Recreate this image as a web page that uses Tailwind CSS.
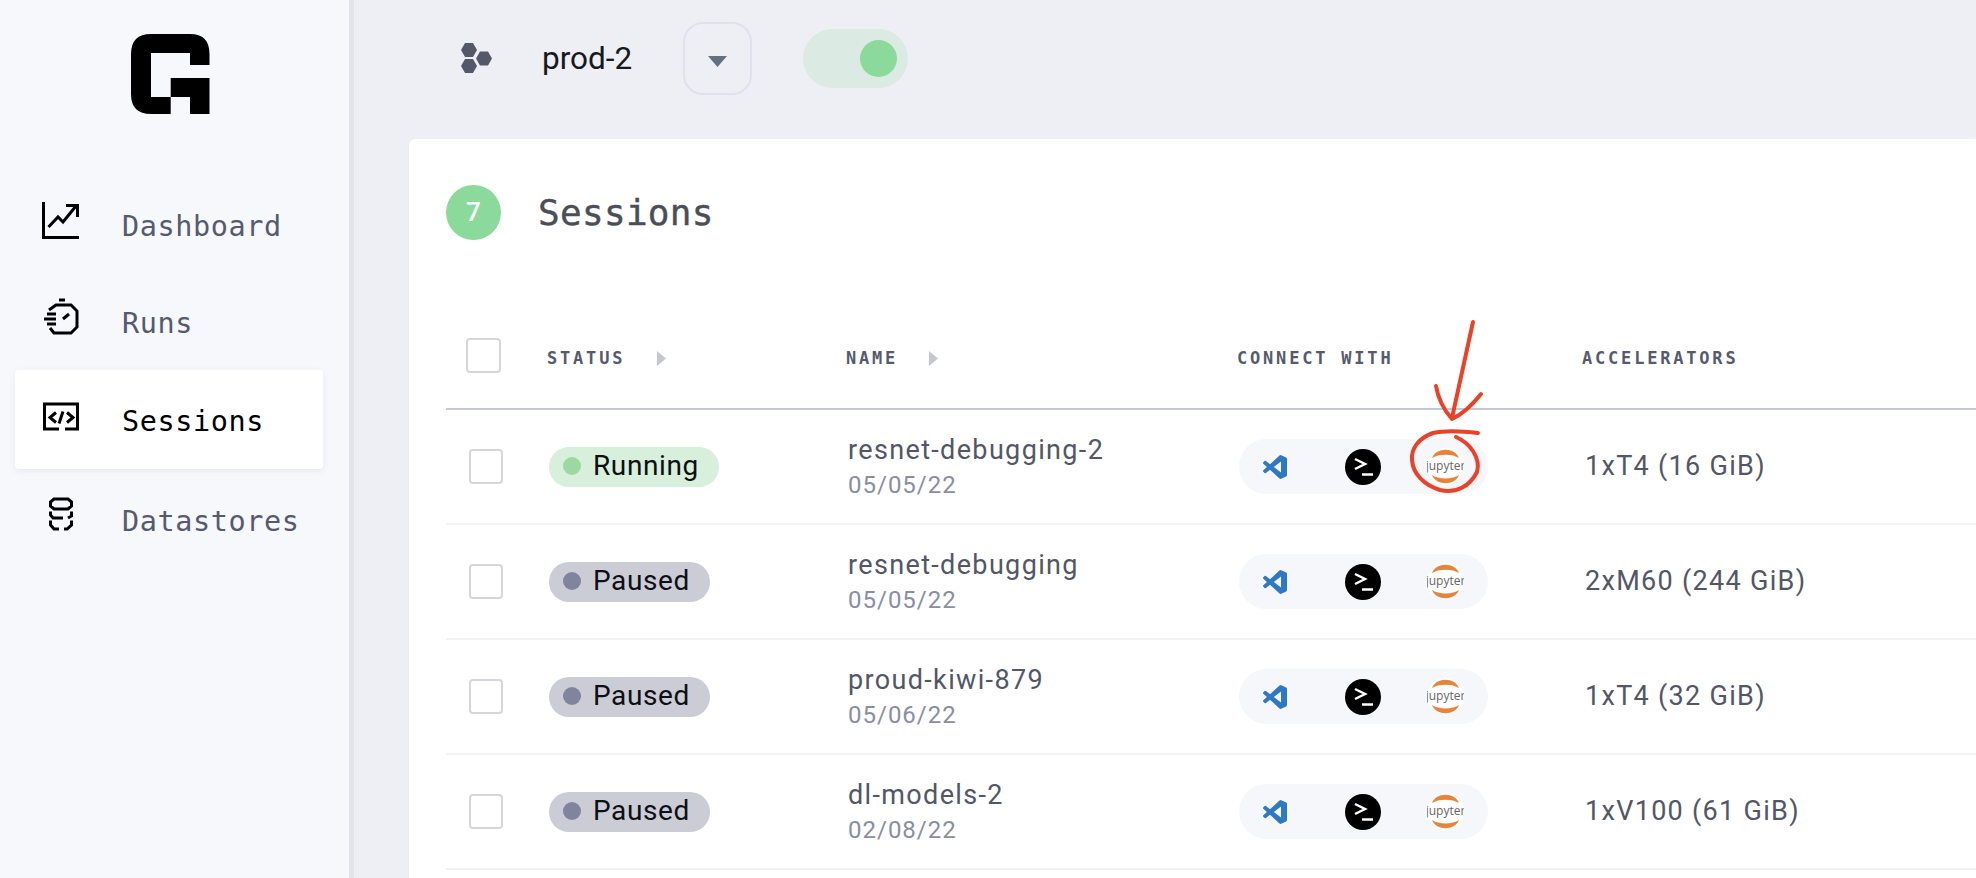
<!DOCTYPE html>
<html>
<head>
<meta charset="utf-8">
<script src="https://cdn.jsdelivr.net/npm/@tailwindcss/browser@4"></script>
</head>
<body class="m-0 h-[878px] w-[1976px] overflow-hidden bg-[#eeeff4] font-['Roboto',sans-serif]">
<div class="relative flex h-[878px] w-[1976px]">
  <aside class="flex h-full w-[354px] shrink-0 flex-col border-r-[5px] border-[#e3e3ec] bg-[#f7f8fc] pl-[15px] pt-[34px]">
    <svg class="ml-[116px] h-[80px] w-[79px]" viewBox="131 34 79 80"><path fill="#000" d="M151 34H190Q209.500 34 209.500 54V65H190V53H151V97H170.700V78H209.500V114H190V97H170.700V114H151Q131 114 131 94V54Q131 34 151 34Z"/></svg>
    <nav class="mt-[61px] flex w-[308px] flex-col font-['DejaVu_Sans_Mono',monospace] text-[28.500px] tracking-[0.600px] text-[#565a6e]">
      <a class="flex h-[98px] items-center gap-[43px] pl-[27px]">
        <svg class="relative top-[-4px] h-[37px] w-[37px] shrink-0" viewBox="0 0 37 37" fill="none" stroke="#000" stroke-width="3"><path d="M1.500 0V35.500H37"/><path d="M6.500 25L16 15L21 20L34 4"/><path d="M24 3.500H35.500V15"/></svg>
        <span class="relative top-[3px]">Dashboard</span>
      </a>
      <a class="flex h-[97px] items-center gap-[43px] pl-[27px]">
        <svg class="relative top-[-5px] h-[37px] w-[37px] shrink-0" viewBox="0 0 37 37" fill="none" stroke="#000" stroke-width="3"><path d="M17 2H23"/><path d="M7 12L14 7H29L35 13V29L29 35H12L8 30"/><path d="M5 16H14M2 21H14M5 26H14"/><path d="M21 21L27 16"/></svg>
        <span class="relative top-[3px]">Runs</span>
      </a>
      <a class="flex h-[99px] items-center gap-[43px] rounded-sm bg-white pl-[27px] text-black shadow-[0_2px_6px_rgba(90,95,140,0.10)]">
        <svg class="relative top-[-3px] h-[37px] w-[37px] shrink-0" viewBox="0 0 37 37" fill="none" stroke="#000" stroke-width="3"><path d="M17 31H2.500V6H35.500V31H23"/><path d="M14 14.500L8 19.500L14 24.500M25 14.500L31 19.500L25 24.500M21 13.500L17 25.500"/></svg>
        <span class="relative top-[3px]">Sessions</span>
      </a>
      <a class="flex h-[102px] items-center gap-[43px] pl-[27px] text-[#565a6e]">
        <svg class="relative top-[-6px] h-[37px] w-[37px] shrink-0" viewBox="0 0 37 37" fill="none" stroke="#000" stroke-width="3"><path d="M12 3H26L29.500 6V10L26 13H12L8.500 10V6Z"/><path d="M8.500 15.500V19L11 22H21M29.500 15.500V20L26 22"/><path d="M8.500 24.500V29L12 33H17M29.500 24.500V29L25 33H22"/></svg>
        <span class="relative top-[2px]">Datastores</span>
      </a>
    </nav>
  </aside>

  <main class="flex min-w-0 flex-1 flex-col">
    <header class="flex h-[139px] shrink-0 items-start">
      <svg class="ml-[107px] mt-[43px] h-[30px] w-[32px]" viewBox="0 0 32 30" fill="#555869"><path d="M0 7L4 0H12L16 7L12 14H4Z"/><path d="M15 15.500L19 8.500H27L31 15.500L27 22.500H19Z"/><path d="M0 23L4 16H12L16 23L12 30H4Z"/></svg>
      <span class="ml-[49px] mt-[40px] w-[91px] text-[31.500px] leading-[38px] text-[#16191d]">prod-2</span>
      <button class="ml-[50px] mt-[22px] flex h-[73px] w-[69px] items-center justify-center rounded-[20px] border-2 border-[#e0e1ec]">
        <svg class="relative top-[3px] h-[11px] w-[19px]" viewBox="0 0 19 11" fill="#64707f"><path d="M0 0H19L9.500 11Z"/></svg>
      </button>
      <div class="ml-[51px] mt-[29px] flex h-[59px] w-[105px] items-center justify-end rounded-full bg-[#dbeae2] pr-[11px]"><span class="h-[37px] w-[37px] rounded-full bg-[#8bd99b]"></span></div>
    </header>

    <section class="ml-[55px] flex-1 rounded-tl-md bg-white pl-[37px]">
      <div class="flex h-[101px] items-end">
        <span class="flex h-[55px] w-[55px] items-center justify-center rounded-full bg-[#8bd99b] text-[26px] font-medium text-white">7</span>
        <h1 class="ml-[37px] pb-[2px] font-['DejaVu_Sans_Mono',monospace] text-[36px] font-normal leading-[50px] tracking-[0.300px] text-[#4a4e55] [-webkit-text-stroke:0.4px_#4a4e55]">Sessions</h1>
      </div>

      <div class="flex h-[170px] items-end border-b-2 border-[#c5c7dc] pb-[35px] font-['DejaVu_Sans_Mono',monospace] text-[17px] font-bold leading-[22px] tracking-[2.800px] text-[#565a6e]">
        <span class="ml-[20px] h-[35px] w-[35px] rounded-[4px] border-2 border-[#d5d6db]"></span>
        <span class="ml-[46px] flex w-[299px] items-center gap-[32px] pb-[4px]">STATUS<svg class="h-[15px] w-[9px]" viewBox="0 0 9 15" fill="#c5c6d2"><path d="M0 0L9 7.500L0 15Z"/></svg></span>
        <span class="flex w-[391px] items-center gap-[31px] pb-[4px]">NAME<svg class="h-[15px] w-[9px]" viewBox="0 0 9 15" fill="#c5c6d2"><path d="M0 0L9 7.500L0 15Z"/></svg></span>
        <span class="w-[345px] pb-[4px]">CONNECT WITH</span>
        <span class="pb-[4px]">ACCELERATORS</span>
      </div>

      <!-- rows -->
      <div class="flex h-[115px] items-center border-b-2 border-[#f2f2f5]">
        <span class="ml-[23px] h-[35px] w-[34px] shrink-0 rounded-[4px] border-2 border-[#d5d6db]"></span>
        <span class="ml-[46px] w-[299px] shrink-0"><span class="flex h-[40px] w-[170px] items-center gap-[12px] rounded-full bg-[#d8efdb] pb-[1px] pl-[14px] text-[28px] tracking-[0.600px] text-[#0d0f12]"><i class="h-[18px] w-[18px] rounded-full bg-[#9cd9a0]"></i>Running</span></span>
        <div class="w-[391px] shrink-0 pt-[3px] text-[27px] leading-[34px] tracking-[1.350px] text-[#535666]">resnet-debugging-2<div class="text-[24px] leading-[37px] tracking-[1px] text-[#8a8da3]">05/05/22</div></div>
        <div class="flex h-[55px] w-[249px] shrink-0 items-center rounded-full bg-[#f6f7fb] pl-[24px]">
          <svg class="h-[24px] w-[24px]" viewBox="0 0 24 24" fill="#2f78c4"><path d="M23.150 2.587L18.210.210a1.494 1.494 0 0 0-1.705.290l-9.460 8.630-4.120-3.128a.999.999 0 0 0-1.276.057L.327 7.261A1 1 0 0 0 .326 8.740L3.899 12 .326 15.260a1 1 0 0 0 .001 1.479L1.650 17.940a.999.999 0 0 0 1.276.057l4.120-3.128 9.460 8.630a1.492 1.492 0 0 0 1.704.290l4.942-2.377A1.500 1.500 0 0 0 24 20.060V3.939a1.500 1.500 0 0 0-.850-1.352zm-5.146 14.861L10.826 12l7.178-5.448v10.896z"/></svg>
          <svg class="ml-[58px] h-[36px] w-[36px]" viewBox="0 0 36 36"><circle cx="18" cy="18" r="18" fill="#000"/><path d="M10 10L20 15L10 20" fill="none" stroke="#fff" stroke-width="2.500"/><path d="M17 25.500H28" stroke="#fff" stroke-width="2.500"/></svg>
          <svg class="ml-[46px] h-[37px] w-[37px]" viewBox="0 0 37 37"><circle cx="18.500" cy="18.500" r="18.500" fill="#fff"/><path d="M5 10C9 -1 28 -1 32 10C26 5.500 11 5.500 5 10Z" fill="#e8833a"/><path d="M5 27C9 38 28 38 32 27C26 31.500 11 31.500 5 27Z" fill="#e8833a"/><text x="18.500" y="21.500" text-anchor="middle" font-family="Open Sans" font-size="12" fill="#666">jupyter</text></svg>
        </div>
        <div class="ml-[97px] text-[27px] tracking-[1.300px] text-[#535666]">1xT4 (16 GiB)</div>
      </div>

      <div class="flex h-[115px] items-center border-b-2 border-[#f2f2f5]">
        <span class="ml-[23px] h-[35px] w-[34px] shrink-0 rounded-[4px] border-2 border-[#d5d6db]"></span>
        <span class="ml-[46px] w-[299px] shrink-0"><span class="flex h-[40px] w-[161px] items-center gap-[12px] rounded-full bg-[#cbccd6] pb-[1px] pl-[14px] text-[28px] tracking-[0.600px] text-[#0d0f12]"><i class="h-[18px] w-[18px] rounded-full bg-[#80849c]"></i>Paused</span></span>
        <div class="w-[391px] shrink-0 pt-[3px] text-[27px] leading-[34px] tracking-[1.350px] text-[#535666]">resnet-debugging<div class="text-[24px] leading-[37px] tracking-[1px] text-[#8a8da3]">05/05/22</div></div>
        <div class="flex h-[55px] w-[249px] shrink-0 items-center rounded-full bg-[#f6f7fb] pl-[24px]">
          <svg class="h-[24px] w-[24px]" viewBox="0 0 24 24" fill="#2f78c4"><path d="M23.150 2.587L18.210.210a1.494 1.494 0 0 0-1.705.290l-9.460 8.630-4.120-3.128a.999.999 0 0 0-1.276.057L.327 7.261A1 1 0 0 0 .326 8.740L3.899 12 .326 15.260a1 1 0 0 0 .001 1.479L1.650 17.940a.999.999 0 0 0 1.276.057l4.120-3.128 9.460 8.630a1.492 1.492 0 0 0 1.704.290l4.942-2.377A1.500 1.500 0 0 0 24 20.060V3.939a1.500 1.500 0 0 0-.850-1.352zm-5.146 14.861L10.826 12l7.178-5.448v10.896z"/></svg>
          <svg class="ml-[58px] h-[36px] w-[36px]" viewBox="0 0 36 36"><circle cx="18" cy="18" r="18" fill="#000"/><path d="M10 10L20 15L10 20" fill="none" stroke="#fff" stroke-width="2.500"/><path d="M17 25.500H28" stroke="#fff" stroke-width="2.500"/></svg>
          <svg class="ml-[46px] h-[37px] w-[37px]" viewBox="0 0 37 37"><circle cx="18.500" cy="18.500" r="18.500" fill="#fff"/><path d="M5 10C9 -1 28 -1 32 10C26 5.500 11 5.500 5 10Z" fill="#e8833a"/><path d="M5 27C9 38 28 38 32 27C26 31.500 11 31.500 5 27Z" fill="#e8833a"/><text x="18.500" y="21.500" text-anchor="middle" font-family="Open Sans" font-size="12" fill="#666">jupyter</text></svg>
        </div>
        <div class="ml-[97px] text-[27px] tracking-[1.300px] text-[#535666]">2xM60 (244 GiB)</div>
      </div>

      <div class="flex h-[115px] items-center border-b-2 border-[#f2f2f5]">
        <span class="ml-[23px] h-[35px] w-[34px] shrink-0 rounded-[4px] border-2 border-[#d5d6db]"></span>
        <span class="ml-[46px] w-[299px] shrink-0"><span class="flex h-[40px] w-[161px] items-center gap-[12px] rounded-full bg-[#cbccd6] pb-[1px] pl-[14px] text-[28px] tracking-[0.600px] text-[#0d0f12]"><i class="h-[18px] w-[18px] rounded-full bg-[#80849c]"></i>Paused</span></span>
        <div class="w-[391px] shrink-0 pt-[3px] text-[27px] leading-[34px] tracking-[1.350px] text-[#535666]">proud-kiwi-879<div class="text-[24px] leading-[37px] tracking-[1px] text-[#8a8da3]">05/06/22</div></div>
        <div class="flex h-[55px] w-[249px] shrink-0 items-center rounded-full bg-[#f6f7fb] pl-[24px]">
          <svg class="h-[24px] w-[24px]" viewBox="0 0 24 24" fill="#2f78c4"><path d="M23.150 2.587L18.210.210a1.494 1.494 0 0 0-1.705.290l-9.460 8.630-4.120-3.128a.999.999 0 0 0-1.276.057L.327 7.261A1 1 0 0 0 .326 8.740L3.899 12 .326 15.260a1 1 0 0 0 .001 1.479L1.650 17.940a.999.999 0 0 0 1.276.057l4.120-3.128 9.460 8.630a1.492 1.492 0 0 0 1.704.290l4.942-2.377A1.500 1.500 0 0 0 24 20.060V3.939a1.500 1.500 0 0 0-.850-1.352zm-5.146 14.861L10.826 12l7.178-5.448v10.896z"/></svg>
          <svg class="ml-[58px] h-[36px] w-[36px]" viewBox="0 0 36 36"><circle cx="18" cy="18" r="18" fill="#000"/><path d="M10 10L20 15L10 20" fill="none" stroke="#fff" stroke-width="2.500"/><path d="M17 25.500H28" stroke="#fff" stroke-width="2.500"/></svg>
          <svg class="ml-[46px] h-[37px] w-[37px]" viewBox="0 0 37 37"><circle cx="18.500" cy="18.500" r="18.500" fill="#fff"/><path d="M5 10C9 -1 28 -1 32 10C26 5.500 11 5.500 5 10Z" fill="#e8833a"/><path d="M5 27C9 38 28 38 32 27C26 31.500 11 31.500 5 27Z" fill="#e8833a"/><text x="18.500" y="21.500" text-anchor="middle" font-family="Open Sans" font-size="12" fill="#666">jupyter</text></svg>
        </div>
        <div class="ml-[97px] text-[27px] tracking-[1.300px] text-[#535666]">1xT4 (32 GiB)</div>
      </div>

      <div class="flex h-[115px] items-center border-b-2 border-[#f2f2f5]">
        <span class="ml-[23px] h-[35px] w-[34px] shrink-0 rounded-[4px] border-2 border-[#d5d6db]"></span>
        <span class="ml-[46px] w-[299px] shrink-0"><span class="flex h-[40px] w-[161px] items-center gap-[12px] rounded-full bg-[#cbccd6] pb-[1px] pl-[14px] text-[28px] tracking-[0.600px] text-[#0d0f12]"><i class="h-[18px] w-[18px] rounded-full bg-[#80849c]"></i>Paused</span></span>
        <div class="w-[391px] shrink-0 pt-[3px] text-[27px] leading-[34px] tracking-[1.350px] text-[#535666]">dl-models-2<div class="text-[24px] leading-[37px] tracking-[1px] text-[#8a8da3]">02/08/22</div></div>
        <div class="flex h-[55px] w-[249px] shrink-0 items-center rounded-full bg-[#f6f7fb] pl-[24px]">
          <svg class="h-[24px] w-[24px]" viewBox="0 0 24 24" fill="#2f78c4"><path d="M23.150 2.587L18.210.210a1.494 1.494 0 0 0-1.705.290l-9.460 8.630-4.120-3.128a.999.999 0 0 0-1.276.057L.327 7.261A1 1 0 0 0 .326 8.740L3.899 12 .326 15.260a1 1 0 0 0 .001 1.479L1.650 17.940a.999.999 0 0 0 1.276.057l4.120-3.128 9.460 8.630a1.492 1.492 0 0 0 1.704.290l4.942-2.377A1.500 1.500 0 0 0 24 20.060V3.939a1.500 1.500 0 0 0-.850-1.352zm-5.146 14.861L10.826 12l7.178-5.448v10.896z"/></svg>
          <svg class="ml-[58px] h-[36px] w-[36px]" viewBox="0 0 36 36"><circle cx="18" cy="18" r="18" fill="#000"/><path d="M10 10L20 15L10 20" fill="none" stroke="#fff" stroke-width="2.500"/><path d="M17 25.500H28" stroke="#fff" stroke-width="2.500"/></svg>
          <svg class="ml-[46px] h-[37px] w-[37px]" viewBox="0 0 37 37"><circle cx="18.500" cy="18.500" r="18.500" fill="#fff"/><path d="M5 10C9 -1 28 -1 32 10C26 5.500 11 5.500 5 10Z" fill="#e8833a"/><path d="M5 27C9 38 28 38 32 27C26 31.500 11 31.500 5 27Z" fill="#e8833a"/><text x="18.500" y="21.500" text-anchor="middle" font-family="Open Sans" font-size="12" fill="#666">jupyter</text></svg>
        </div>
        <div class="ml-[97px] text-[27px] tracking-[1.300px] text-[#535666]">1xV100 (61 GiB)</div>
      </div>
    </section>
  </main>

  <!-- hand-drawn annotation over the table -->
  <svg class="pointer-events-none absolute left-[1400px] top-[310px] h-[200px] w-[100px]" viewBox="1400 310 100 200" fill="none" stroke="#e8432a" stroke-width="4" stroke-linecap="round" stroke-linejoin="round">
    <path d="M1473 322L1452 418"/>
    <path d="M1436 386C1438 398 1444 410 1452 419C1463 414 1473 404 1481 394"/>
    <path d="M1478 433C1462 431 1446 430 1433 433C1419 438 1411 448 1412 460C1413 474 1424 485 1440 490C1456 494 1470 486 1477 472C1481 458 1470 443 1456 437"/>
  </svg>
</div>
</body>
</html>
